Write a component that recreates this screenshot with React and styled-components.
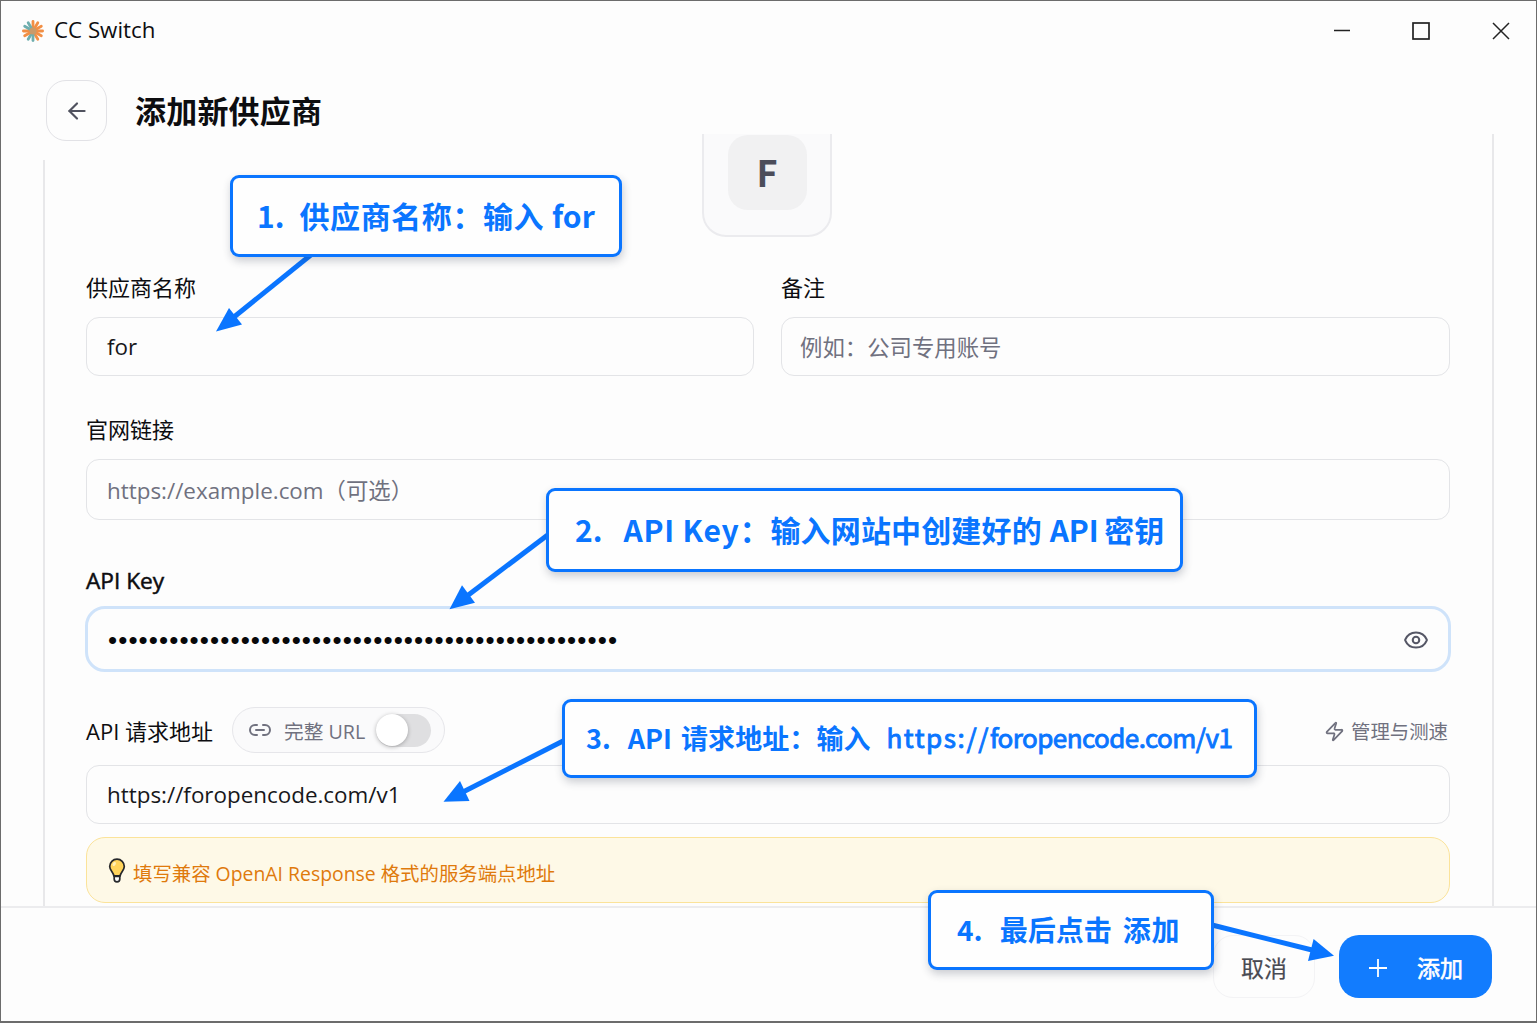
import React from "react";
import styled, { createGlobalStyle } from "styled-components";
import { ArrowLeft, Eye, Link2, Zap } from "lucide-react";

const GlobalStyle = createGlobalStyle`
  * {
    box-sizing: border-box;
  }

  body {
    margin: 0;
    overflow: hidden;
    background: #fdfdfd;
  }
`;

const blue = "#0a75ff";
const line = "#e3e4e7";
const muted = "#70717f";
const ui = `"Open Sans", "Noto Sans CJK SC", sans-serif`;
const cjk = `"Noto Sans CJK SC", sans-serif`;

const Window = styled.div`
  position: relative;
  display: flex;
  flex-direction: column;
  width: 1537px;
  height: 1023px;
  overflow: hidden;
  border: 1px solid #6c6c6c;
  border-bottom-width: 2px;
  background: #fdfdfd;
  color: #0d0d10;
  font-family: ${ui};
`;

const TitleBar = styled.div`
  display: flex;
  align-items: center;
  flex: 0 0 59px;
  padding: 0 26px 0 20px;
`;

const AppName = styled.div`
  margin: 0 0 2px 9px;
  flex: 1;
  font-size: 22.3px;
`;

const Controls = styled.div`
  display: flex;
  gap: 62px;
`;

const Header = styled.div`
  display: flex;
  align-items: flex-start;
  height: 74px;
  flex: none;
  padding: 20px 0 0 45px;
`;

const BackButton = styled.button`
  display: flex;
  align-items: center;
  justify-content: center;
  flex: 0 0 61px;
  height: 61px;
  padding: 0;
  border: 1px solid #e2e2e6;
  border-radius: 20px;
  background: none;
  color: #50525f;
`;

const Title = styled.h1`
  margin: 14px 0 0 28px;
  font: 700 31px/1 ${cjk};
  letter-spacing: 0.2px;
`;

const Body = styled.div`
  display: flex;
  flex: 0 0 772px;
  padding: 0 42px;
`;

const Rail = styled.div`
  flex: 0 0 2px;
  margin-top: ${p => p.$top || 0}px;
  background: #e8e8ea;
`;

const Form = styled.div`
  display: flex;
  flex-direction: column;
  flex: 1;
  padding: 0 42px 0 41px;
`;

const AvatarBox = styled.div`
  display: flex;
  justify-content: center;
  align-self: center;
  width: 130px;
  height: 103px;
  margin-right: 3px;
  padding: 1px 0 0 1px;
  border: 2px solid #ebebee;
  border-top: 0;
  border-radius: 0 0 24px 24px;
  background: #fafafb;
`;

const Avatar = styled.div`
  display: flex;
  align-items: center;
  justify-content: center;
  width: 79px;
  height: 75px;
  padding-bottom: 3px;
  border-radius: 20px;
  background: #f1f1f2;
  color: #4c4d5a;
  font: 700 36px/1 ${cjk};
`;

const FieldRow = styled.div`
  display: grid;
  grid-template-columns: 668px 1fr;
  gap: 27px;
`;

const Label = styled.div`
  display: flex;
  align-items: center;
  height: 30px;
  margin-top: ${p => p.$top}px;
  font-size: 22px;
  white-space: pre;
`;

const StrongLabel = styled(Label)`
  font-size: 22.7px;
  -webkit-text-stroke: 0.5px #0d0d10;
`;

const Input = styled.div`
  display: flex;
  align-items: center;
  height: ${p => p.$height || 59}px;
  margin-top: ${p => p.$top}px;
  padding: 0 20px 0 ${p => p.$left || 20}px;
  border: 1.5px solid ${line};
  border-radius: 13px;
  color: ${p => (p.$placeholder ? muted : "#17171a")};
  font-size: 22.4px;
  white-space: pre;
`;

const KeyInput = styled(Input)`
  justify-content: space-between;
  margin-left: -1px;
  margin-right: -1px;
  padding-top: 2px;
  padding-right: 19px;
  border: 3px solid #cfe3fa;
  border-radius: 20px;
  color: #08080a;
`;

const Dots = styled.span`
  font: 26px/1 "Liberation Sans", sans-serif;
  letter-spacing: 1.1px;
`;

const UrlHead = styled.div`
  display: flex;
  align-items: center;
  height: 46px;
  margin-top: 35px;
  font-size: 22px;
`;

const FullUrl = styled.div`
  display: flex;
  align-items: center;
  width: 213px;
  height: 46px;
  margin-left: 19px;
  padding: 0 13px 0 15px;
  border: 1px solid #e6e6ea;
  border-radius: 23px;
  background: #fafafb;
  color: ${muted};
  font-size: 19.7px;

  svg {
    margin-right: 12px;
  }
`;

const Switch = styled.div`
  flex: 0 0 55px;
  height: 33px;
  margin-left: auto;
  border-radius: 17px;
  background: #dfdfe1;
`;

const Knob = styled.div`
  width: 32px;
  height: 32px;
  border-radius: 50%;
  background: #fff;
  box-shadow: 0 1px 4px rgba(0, 0, 0, 0.28);
`;

const SpeedTest = styled.div`
  display: flex;
  align-items: center;
  gap: 6px;
  margin-left: auto;
  margin-right: 2px;
  color: ${muted};
  font-size: 19.4px;

  svg {
    margin-top: 3px;
  }
`;

const Notice = styled.div`
  display: flex;
  align-items: center;
  height: 66px;
  margin-top: 13px;
  padding: 4px 21px 0;
  border: 1px solid #fbe39a;
  border-radius: 19px;
  background: #fef9e7;
  color: #df7a0c;
  font-size: 19.4px;
  white-space: pre;

  svg {
    margin: 0 7px 3px 0;
  }
`;

const Footer = styled.div`
  display: flex;
  align-items: flex-start;
  justify-content: flex-end;
  flex: 1;
  gap: 24px;
  padding: 27px 44px 0;
  border-top: 2px solid #ececee;
`;

const Button = styled.button`
  display: flex;
  align-items: center;
  justify-content: center;
  width: ${p => (p.$primary ? 153 : 102)}px;
  height: 63px;
  padding: 2px 0 0;
  border: ${p => (p.$primary ? "0" : "1px solid #f3f3f5")};
  border-radius: 20px;
  background: ${p => (p.$primary ? "#127cfe" : "none")};
  color: ${p => (p.$primary ? "#fff" : "#494a52")};
  font: 23px/1 ${cjk};
  -webkit-text-stroke: ${p => (p.$primary ? 0.6 : 0.2)}px currentColor;

  svg {
    margin: 0 30px 0 1px;
  }
`;

const Arrows = styled.svg`
  position: absolute;
  top: -1px;
  left: -1px;
  pointer-events: none;
`;

const Callout = styled.div`
  position: absolute;
  top: ${p => p.$y - 1}px;
  left: ${p => p.$x - 1}px;
  display: flex;
  align-items: center;
  width: ${p => p.$w}px;
  height: ${p => p.$h}px;
  padding: 0 0 3px ${p => p.$pad}px;
  border: 3px solid ${blue};
  border-radius: 9px;
  background: #fefefe;
  box-shadow: 1px 4px 8px rgba(40, 50, 70, 0.24);
  color: ${blue};
  font: 700 ${p => p.$size}px/1 ${cjk};
  white-space: pre;
`;

const Run = styled.span`
  margin-left: ${p => p.$gap || 0}px;
  letter-spacing: ${p => p.$spacing || 0}px;
`;

const UrlRun = styled(Run)`
  font-size: 26px;
  font-weight: 400;
  -webkit-text-stroke: 0.9px ${blue};
`;

const callouts = [
  {
    box: { $x: 230, $y: 175, $w: 392, $h: 82, $pad: 24, $size: 30 },
    runs: [["1."], ["供应商名称：", 15, 0.6], ["输入", 0, 0.5], ["for", 8]],
  },
  {
    box: { $x: 546, $y: 488, $w: 637, $h: 84, $pad: 26, $size: 30 },
    runs: [["2."], ["API Key：", 21, 0.8], ["输入网站中创建好的", 0, 0.15], ["API", 8, -0.2], ["密钥", 6]],
  },
  {
    box: { $x: 562, $y: 699, $w: 695, $h: 79, $pad: 21, $size: 27 },
    runs: [["3."], ["API", 17], ["请求地址：", 9, 0.1], ["输入"]],
    url: [["https://", 16, 1.6], ["foropencode.com/v1", 0, -0.55]],
  },
  {
    box: { $x: 928, $y: 890, $w: 286, $h: 80, $pad: 26, $size: 28 },
    runs: [["4."], ["最后点击", 17], ["添加", 11, 0.9]],
  },
];

const arrows = [
  { from: [312, 254], to: [234, 317], head: "216,331.5 229,308 242,324.5" },
  { from: [549, 534], to: [467, 596], head: "449.5,609.3 462,585.3 475,602.7" },
  { from: [565, 740], to: [463, 792], head: "443.5,801.7 460,781 469.5,800.9" },
  { from: [1212, 925], to: [1312, 950], head: "1334,955.8 1313.6,939 1308,961" },
];

const rays = Array.from({ length: 12 }, (_, i) => i * 30);
const tealRays = [180, 210, 300, 330];

const Logo = () => (
  <svg width="24" height="24" viewBox="-12 -12 24 24" strokeLinecap="round" strokeWidth="2.8">
    {rays.map(a => (
      <line
        key={a}
        x1="0"
        y1="-1"
        x2="0"
        y2="-9.6"
        stroke={tealRays.includes(a) ? "#6faeae" : "#f28f45"}
        transform={`rotate(${a})`}
      />
    ))}
    <circle r="3.6" fill="#c99a6a" />
  </svg>
);

const Bulb = () => (
  <svg width="18" height="25" viewBox="0 0 18 25">
    <path
      d="M9 1.2a7.3 7.3 0 0 0-7.3 7.4c0 3.5 3.6 5.6 4.2 9.2h6.2c.6-3.6 4.2-5.7 4.2-9.2A7.3 7.3 0 0 0 9 1.2z"
      fill="#ffd45c"
      stroke="#26282b"
      strokeWidth="1.7"
    />
    <path d="M6.2 18.5v2.5a2.8 2.8 0 0 0 5.6 0v-2.5z" fill="#fff" stroke="#26282b" strokeWidth="1.7" />
    <ellipse cx="6.2" cy="6" rx="1.5" ry="2.2" fill="#fff0b8" transform="rotate(30 6.2 6)" />
  </svg>
);

const App = () => (
  <>
    <GlobalStyle />
    <Window>
      <TitleBar>
        <Logo />
        <AppName>CC Switch</AppName>
        <Controls>
          <svg width="18" height="18" stroke="#222" strokeWidth="1.5">
            <path d="M2 8.5h16" />
          </svg>
          <svg width="18" height="18" stroke="#222" strokeWidth="1.7" fill="none">
            <rect x="1" y="1" width="16" height="16" />
          </svg>
          <svg width="18" height="18" stroke="#222" strokeWidth="1.5">
            <path d="M1 1l16 16M17 1L1 17" />
          </svg>
        </Controls>
      </TitleBar>

      <Header>
        <BackButton>
          <ArrowLeft size={26} strokeWidth={2} />
        </BackButton>
        <Title>添加新供应商</Title>
      </Header>

      <Body>
        <Rail $top={26} />
        <Form>
          <AvatarBox>
            <Avatar>F</Avatar>
          </AvatarBox>

          <FieldRow>
            <div>
              <Label $top={34}>供应商名称</Label>
              <Input $top={16}>for</Input>
            </div>
            <div>
              <Label $top={34}>备注</Label>
              <Input $top={16} $left={18} $placeholder>
                例如：公司专用账号
              </Input>
            </div>
          </FieldRow>

          <Label $top={37}>官网链接</Label>
          <Input $top={16} $height={61} $placeholder>
            https://example.com（可选）
          </Input>

          <StrongLabel $top={45}>API Key</StrongLabel>
          <KeyInput $top={11} $height={66}>
            <Dots>{"•".repeat(50)}</Dots>
            <Eye size={26} strokeWidth={1.9} color="#555766" />
          </KeyInput>

          <UrlHead>
            API 请求地址
            <FullUrl>
              <Link2 size={24} />
              完整 URL
              <Switch>
                <Knob />
              </Switch>
            </FullUrl>
            <SpeedTest>
              <Zap size={21} />
              管理与测速
            </SpeedTest>
          </UrlHead>
          <Input $top={12}>https://foropencode.com/v1</Input>

          <Notice>
            <Bulb />
            填写兼容 OpenAI Response 格式的服务端点地址
          </Notice>
        </Form>
        <Rail />
      </Body>

      <Footer>
        <Button>取消</Button>
        <Button $primary>
          <svg width="18" height="18" stroke="#fff" strokeWidth="1.8">
            <path d="M9 0v18M0 9h18" />
          </svg>
          添加
        </Button>
      </Footer>

      <Arrows width="1537" height="1023">
        {arrows.map(a => (
          <g key={a.head} fill={blue} stroke={blue}>
            <line x1={a.from[0]} y1={a.from[1]} x2={a.to[0]} y2={a.to[1]} strokeWidth="5" />
            <polygon points={a.head} stroke="none" />
          </g>
        ))}
      </Arrows>
      {callouts.map(c => (
        <Callout key={c.box.$x} {...c.box}>
          {c.runs.map(([text, gap, spacing]) => (
            <Run key={text} $gap={gap} $spacing={spacing}>
              {text}
            </Run>
          ))}
          {c.url?.map(([text, gap, spacing]) => (
            <UrlRun key={text} $gap={gap} $spacing={spacing}>
              {text}
            </UrlRun>
          ))}
        </Callout>
      ))}
    </Window>
  </>
);

export default App;
